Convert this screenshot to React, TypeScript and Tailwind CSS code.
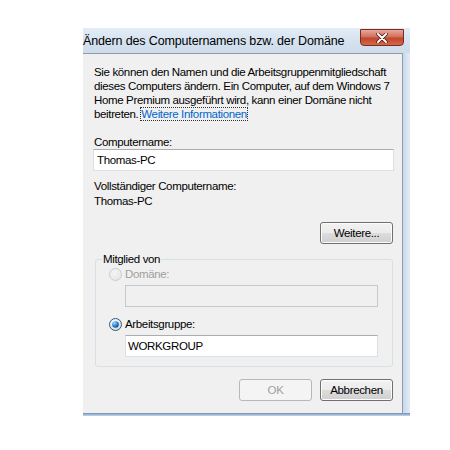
import React from 'react';

const font = { fontFamily: '"Liberation Sans", Arial, sans-serif' };

const Radio: React.FC<{ checked?: boolean; disabled?: boolean }> = ({ checked, disabled }) => (
  <svg width="13" height="13" viewBox="0 0 13 13" className="shrink-0">
    <defs>
      <radialGradient id={checked ? 'rc' : 'rd'} cx="0.4" cy="0.35" r="0.7">
        <stop offset="0" stopColor={disabled ? '#f4f4f4' : '#ffffff'} />
        <stop offset="1" stopColor={disabled ? '#e6e6e6' : '#d4d8dc'} />
      </radialGradient>
      <radialGradient id="dot" cx="0.35" cy="0.3" r="0.8">
        <stop offset="0" stopColor="#a8dcff" />
        <stop offset="0.5" stopColor="#2b8ad6" />
        <stop offset="1" stopColor="#0c3f73" />
      </radialGradient>
    </defs>
    <circle cx="6.5" cy="6.5" r="6" fill={`url(#${checked ? 'rc' : 'rd'})`} stroke={disabled ? '#c9ccd0' : '#3a5a7a'} strokeWidth="1" />
    {checked && <circle cx="6.5" cy="6.5" r="3.3" fill="url(#dot)" />}
  </svg>
);

const Button: React.FC<{ label: string; disabled?: boolean }> = ({ label, disabled }) => (
  <div
    className={
      disabled
        ? 'w-[73px] h-[22px] flex items-center justify-center rounded-[3px] border border-[#b5b8bc] bg-[#f4f4f4] text-[#a0a0a0]'
        : 'w-[73px] h-[22px] flex items-center justify-center rounded-[3px] border border-[#707070] bg-[linear-gradient(#f2f2f2_0%,#ebebeb_50%,#dddddd_50%,#cfcfcf_100%)] text-black shadow-[inset_0_0_0_1px_#fcfcfc]'
    }
  >
    {label}
  </div>
);

export default function App() {
  return (
    <div className="w-[450px] h-[450px] bg-white pt-[28px] pl-[83px] text-[11.5px] leading-[14px] tracking-[-0.35px]" style={font}>
      <div className="w-[327px] flex flex-col">
        {/* title bar */}
        <div className="h-[25px] flex items-start bg-[linear-gradient(180deg,#e4edf7_0%,#d3e0ee_60%,#cedcea_100%)]">
          <div className="flex-1 pt-[5px] text-[12.5px] leading-[17px] tracking-[-0.15px] text-black whitespace-nowrap">
            Ändern des Computernamens bzw. der Domäne
          </div>
          <div className="mr-[6px] mt-[1px] w-[44px] h-[17px] rounded-b-[4px] border border-[#7a2a23] bg-[linear-gradient(#e8a89a_0%,#d0705c_45%,#c2442d_55%,#d26a45_100%)] flex items-center justify-center">
            <svg width="12" height="10" viewBox="0 0 12 10">
              <path d="M2 1 L10 9 M10 1 L2 9" stroke="#3b1410" strokeWidth="3.4" strokeLinecap="round" />
              <path d="M2 1 L10 9 M10 1 L2 9" stroke="#ffffff" strokeWidth="2" strokeLinecap="round" />
            </svg>
          </div>
        </div>
        {/* body + frame */}
        <div className="flex">
          <div className="w-[320px] h-[360px] bg-[#f0f0f0] border-t border-r border-[#8f9cab] pt-[11px] pl-[10px] pr-[9px] flex flex-col text-black">
            <p className="pl-[1px] whitespace-nowrap">
              Sie können den Namen und die Arbeitsgruppenmitgliedschaft
              <br />
              dieses Computers ändern. Ein Computer, auf dem Windows 7
              <br />
              Home Premium ausgeführt wird, kann einer Domäne nicht
              <br />
              beitreten.{' '}
              <span className="text-[#0066cc] outline-dotted outline-1 outline-[#333]">Weitere Informationen</span>
            </p>
            <div className="mt-[14px] pl-[1px]">Computername:</div>
            <div className="h-[22px] w-[301px] bg-white border border-[#dbdfe6] border-t-[#abadb3] flex items-center pl-[3px]">
              Thomas-PC
            </div>
            <div className="mt-[8px] pl-[1px]">Vollständiger Computername:</div>
            <div className="mt-[1px] pl-[1px]">Thomas-PC</div>
            <div className="mt-[14px] flex justify-end">
              <Button label="Weitere..." />
            </div>
            <fieldset className="mt-[8px] ml-[2px] w-[298px] h-[115px] border border-[#d5dfe5] rounded-[3px] pl-[13px] pr-[14px]">
              <legend className="-ml-[7px] px-[1px]">Mitglied von</legend>
              <div className="mt-[1px] flex items-center gap-[3px] text-[#a0a0a0]">
                <Radio disabled />
                <span>Domäne:</span>
              </div>
              <div className="mt-[4px] ml-[16px] h-[22px] border border-[#c5c8cc] bg-[#f0f0f0]" />
              <div className="mt-[10px] flex items-center gap-[3px]">
                <Radio checked />
                <span>Arbeitsgruppe:</span>
              </div>
              <div className="mt-[4px] ml-[16px] h-[22px] bg-white border border-[#dbdfe6] border-t-[#abadb3] flex items-center pl-[2px]">
                WORKGROUP
              </div>
            </fieldset>
            <div className="mt-[12px] flex justify-end gap-[8px]">
              <Button label="OK" disabled />
              <Button label="Abbrechen" />
            </div>
          </div>
          <div className="w-[7px] bg-[linear-gradient(90deg,#c9d9ea,#e2ecf6)]" />
        </div>
        <div className="h-[3px] w-[327px] bg-[linear-gradient(#6f8fb4,#c7d8ea)]" />
      </div>
    </div>
  );
}
